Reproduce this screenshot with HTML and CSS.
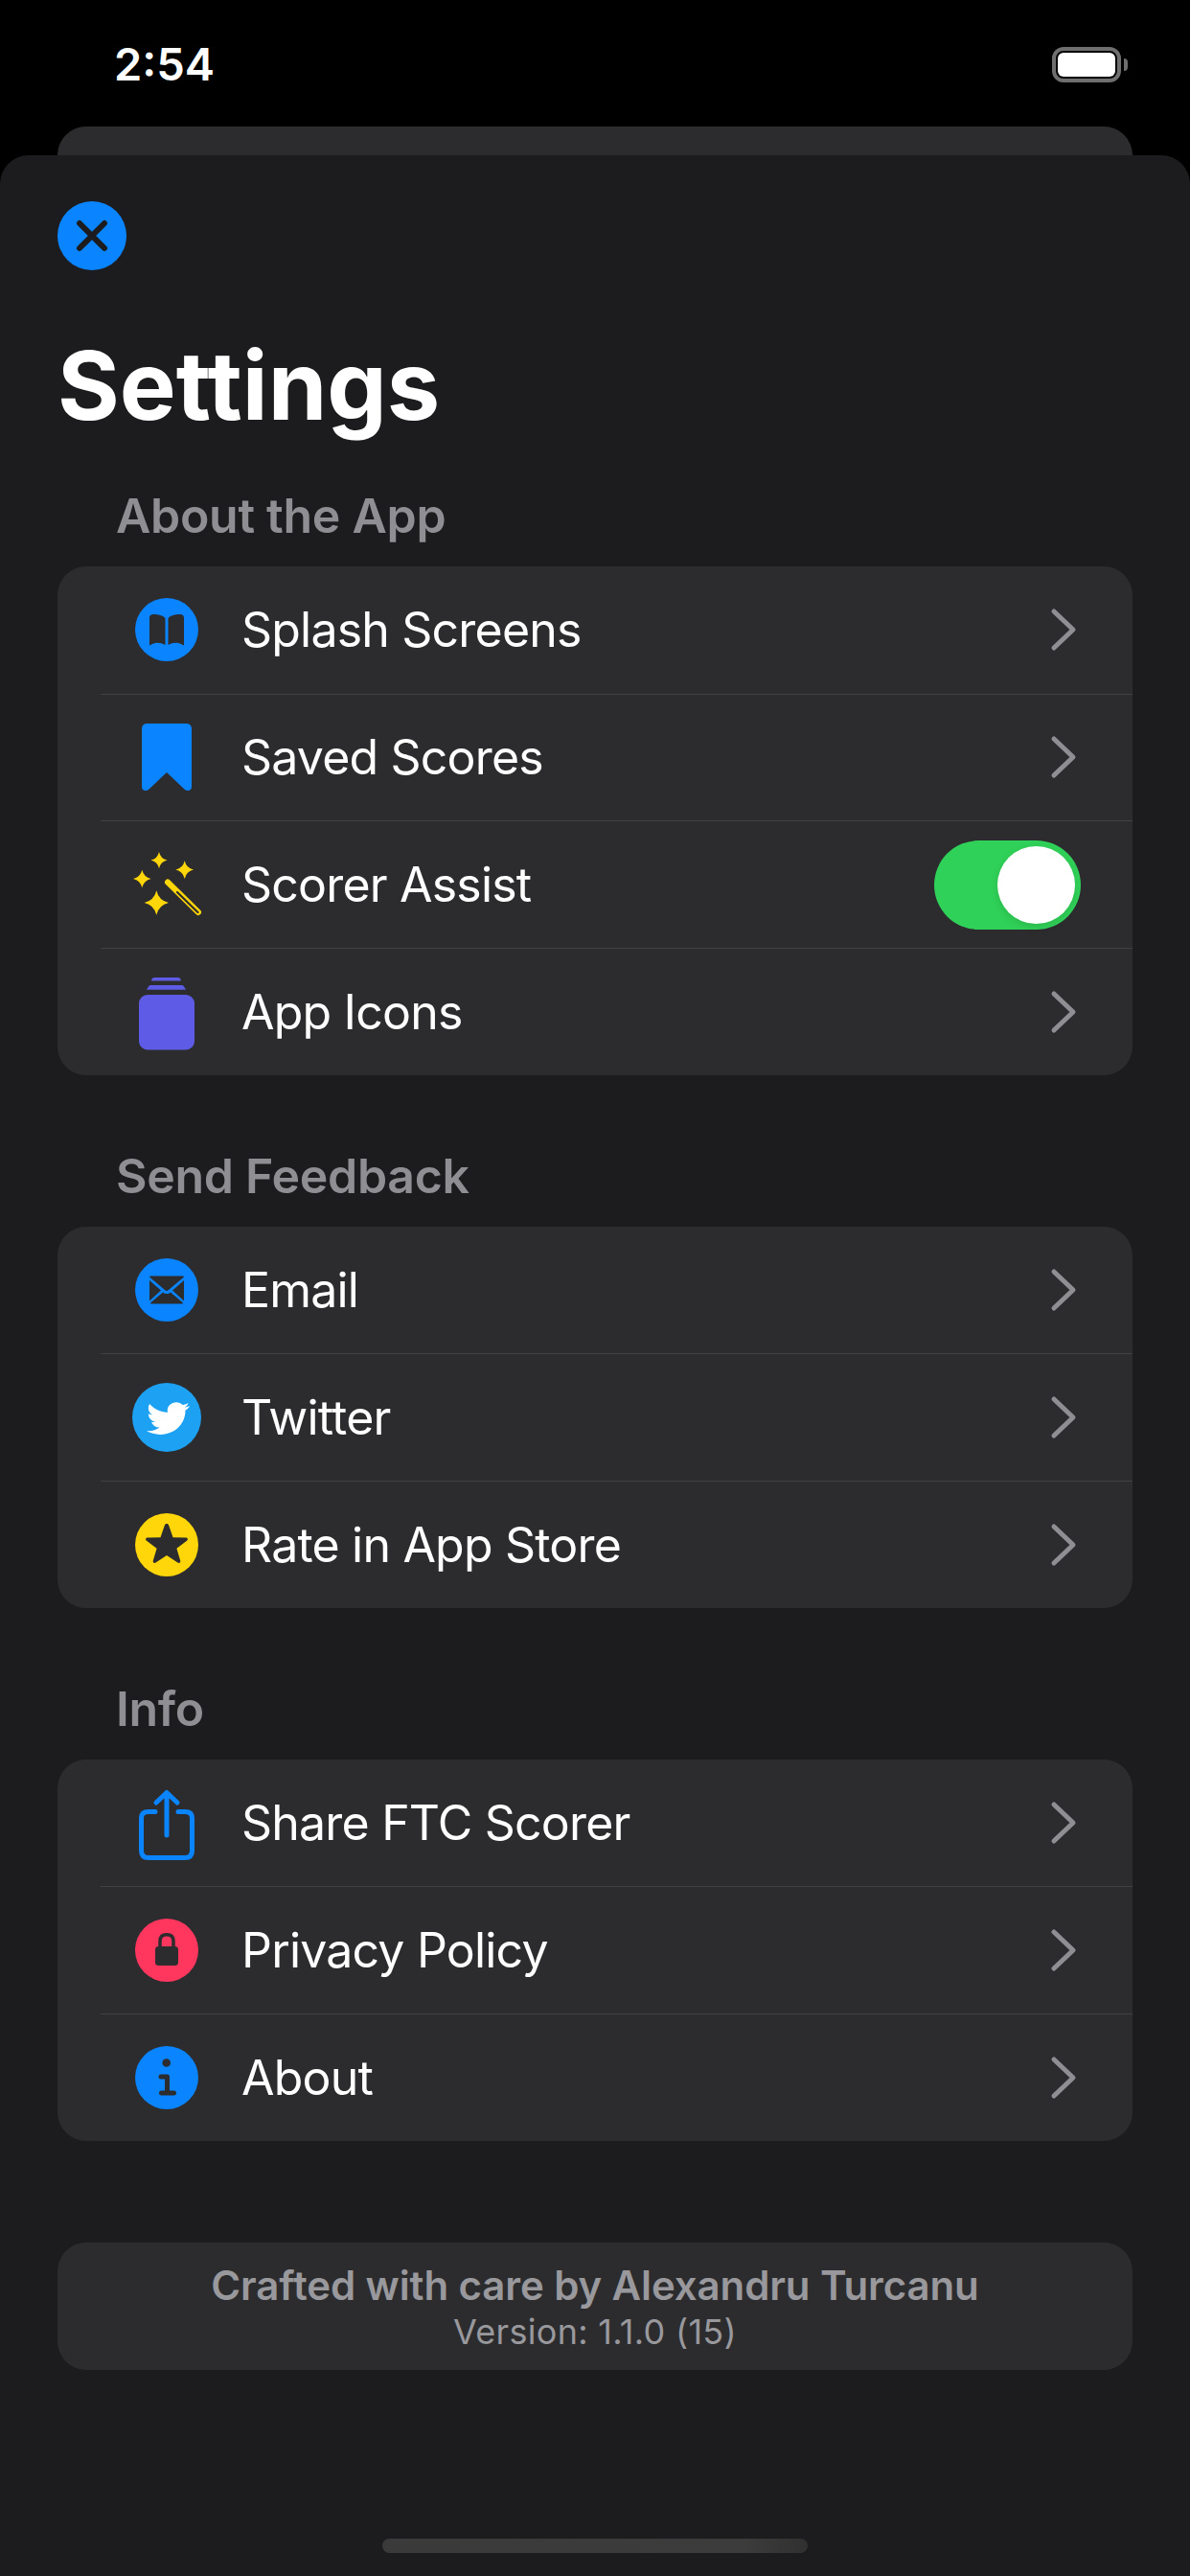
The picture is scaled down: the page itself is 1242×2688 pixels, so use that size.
FILE: index.html
```html
<!DOCTYPE html>
<html lang="en">
<head>
    <meta charset="UTF-8">
    <title>Settings</title>
    <link rel="stylesheet" href="styles.css">
</head>
<body>
<div class="status-bar">
    <span class="status-time">2:54</span>
    <div class="battery"><div class="battery-fill"></div></div>
</div>

<!-- the screen underneath the sheet -->
<div class="back-card"></div>

<div class="sheet">
    <button class="close-btn">
        <svg viewBox="0 0 72 72" width="72" height="72"><circle cx="36" cy="36" r="36" fill="#0a84ff"/><path d="M23 23L49 49M49 23L23 49" stroke="#1c1c1e" stroke-width="6" stroke-linecap="round"/></svg>
    </button>
    <h1 class="title">Settings</h1>

    <h2 class="section-title section-about">About the App</h2>
    <div class="card">
        <div class="row">
            <div class="row-icon">
                <svg viewBox="0 0 72 72" width="72" height="72"><circle cx="36" cy="36" r="33" fill="#0a84ff"/><path d="M18 24C18 21 19.500 20 23 20C27.500 20 31.500 21 34.500 24V52C31 50 27 49.500 24 50C21.500 50.300 20 51.500 18.500 52.500L18 52Z M54 24C54 21 52.500 20 49 20C44.500 20 40.500 21 37.500 24V52C41 50 45 49.500 48 50C50.500 50.300 52 51.500 53.500 52.500L54 52Z" fill="#2c2c2e"/></svg>
            </div>
            <span class="row-label">Splash Screens</span>
            <svg class="chevron" viewBox="0 0 30 46" width="30" height="46"><path d="M5 4L25 23L5 42" fill="none" stroke="#8e8e93" stroke-width="5" stroke-linecap="round" stroke-linejoin="round"/></svg>
        </div>
        <div class="row">
            <div class="row-icon">
                <svg viewBox="0 0 72 72" width="72" height="72"><path d="M16 1H56C60 1 62 3 62 7V67C62 71 58 72 55 70L36 52L17 70C14 72 10 71 10 67V7C10 3 12 1 16 1Z" fill="#0a84ff"/></svg>
            </div>
            <span class="row-label">Saved Scores</span>
            <svg class="chevron" viewBox="0 0 30 46" width="30" height="46"><path d="M5 4L25 23L5 42" fill="none" stroke="#8e8e93" stroke-width="5" stroke-linecap="round" stroke-linejoin="round"/></svg>
        </div>
        <div class="row">
            <div class="row-icon">
                <svg viewBox="0 0 72 72" width="72" height="72" fill="#ffd60a">
                    <path d="M28 2Q29.600 9 36.500 10.600Q29.600 12.200 28 19.200Q26.400 12.200 19.500 10.600Q26.400 9 28 2Z"/>
                    <path d="M54.700 11.300Q56.500 18.800 64 20.600Q56.500 22.400 54.700 29.900Q52.900 22.400 45.400 20.600Q52.900 18.800 54.700 11.300Z"/>
                    <path d="M10.300 20.700Q12.100 28.200 19.600 30Q12.100 31.800 10.300 39.300Q8.500 31.800 1 30Q8.500 28.200 10.300 20.700Z"/>
                    <path d="M25.300 42.300Q27.700 52.600 38 55Q27.700 57.400 25.300 67.700Q22.900 57.400 12.600 55Q22.900 52.600 25.300 42.300Z"/>
                    <path d="M37 33.500L69 65" fill="none" stroke="#ffd60a" stroke-width="6" stroke-linecap="round"/>
                    <path d="M47 44L68.500 65" fill="none" stroke="#2c2c2e" stroke-width="2.200" stroke-linecap="round"/>
                </svg>
            </div>
            <span class="row-label">Scorer Assist</span>
            <div class="toggle"><div class="toggle-knob"></div></div>
        </div>
        <div class="row">
            <div class="row-icon">
                <svg viewBox="0 0 72 72" width="72" height="72" fill="#5e5ce6"><path d="M20 3C20.500 1 21.500 0 23.500 0H47.500C49.500 0 50.500 1 51 3.500H20Z"/><path d="M15 12.700L17 9.500C17.800 8.300 18.800 8 20 8H51C52.200 8 53.200 8.300 54 9.500L56 12.700Z"/><rect x="7" y="18" width="58" height="57.500" rx="9"/></svg>
            </div>
            <span class="row-label">App Icons</span>
            <svg class="chevron" viewBox="0 0 30 46" width="30" height="46"><path d="M5 4L25 23L5 42" fill="none" stroke="#8e8e93" stroke-width="5" stroke-linecap="round" stroke-linejoin="round"/></svg>
        </div>
    </div>

    <h2 class="section-title">Send Feedback</h2>
    <div class="card">
        <div class="row">
            <div class="row-icon">
                <svg viewBox="0 0 72 72" width="72" height="72"><circle cx="36" cy="36" r="33" fill="#0a84ff"/><path d="M20 21.500H52C53.500 21.500 54 22 54 22.500L38 36C36.500 37.300 35.500 37.300 34 36L18 22.500C18 22 18.500 21.500 20 21.500Z M18 26L30 36.500L18 47.500Z M54 26L42 36.500L54 47.500Z M19 49.500L32 38.500C34.500 40.500 37.500 40.500 40 38.500L53 49.500C53 50 52.500 50.500 52 50.500H20C19.500 50.500 19 50 19 49.500Z" fill="#2c2c2e"/></svg>
            </div>
            <span class="row-label">Email</span>
            <svg class="chevron" viewBox="0 0 30 46" width="30" height="46"><path d="M5 4L25 23L5 42" fill="none" stroke="#8e8e93" stroke-width="5" stroke-linecap="round" stroke-linejoin="round"/></svg>
        </div>
        <div class="row">
            <div class="row-icon">
                <svg viewBox="0 0 72 72" width="72" height="72"><circle cx="36" cy="36" r="36" fill="#1da1f2"/><g transform="translate(15 16.500) scale(1.875 1.720)"><path d="M23.953 4.570a10 10 0 01-2.825.775 4.958 4.958 0 002.163-2.723c-.951.555-2.005.959-3.127 1.184a4.920 4.920 0 00-8.384 4.482C7.690 8.095 4.067 6.130 1.640 3.162a4.822 4.822 0 00-.666 2.475c0 1.710.870 3.213 2.188 4.096a4.904 4.904 0 01-2.228-.616v.060a4.923 4.923 0 003.946 4.827 4.996 4.996 0 01-2.212.085 4.936 4.936 0 004.604 3.417 9.867 9.867 0 01-6.102 2.105c-.390 0-.779-.023-1.170-.067a13.995 13.995 0 007.557 2.209c9.053 0 13.998-7.496 13.998-13.985 0-.210 0-.420-.015-.630A9.935 9.935 0 0024 4.590z" fill="#fff"/></g></svg>
            </div>
            <span class="row-label">Twitter</span>
            <svg class="chevron" viewBox="0 0 30 46" width="30" height="46"><path d="M5 4L25 23L5 42" fill="none" stroke="#8e8e93" stroke-width="5" stroke-linecap="round" stroke-linejoin="round"/></svg>
        </div>
        <div class="row">
            <div class="row-icon">
                <svg viewBox="0 0 72 72" width="72" height="72"><circle cx="36" cy="36" r="33" fill="#ffd60a"/><path d="M36 14C37 14 37.800 14.500 38.200 15.800L42.500 28.300L55.800 28.600C58 28.700 58.600 30.500 57 31.800L46.400 39.800L50.200 52.500C50.800 54.500 49 55.700 47.400 54.600L36 47L24.600 54.600C23 55.700 21.200 54.500 21.800 52.500L25.600 39.800L15 31.800C13.400 30.500 14 28.700 16.200 28.600L29.500 28.300L33.800 15.800C34.200 14.500 35 14 36 14Z" fill="#2c2c2e"/></svg>
            </div>
            <span class="row-label">Rate in App Store</span>
            <svg class="chevron" viewBox="0 0 30 46" width="30" height="46"><path d="M5 4L25 23L5 42" fill="none" stroke="#8e8e93" stroke-width="5" stroke-linecap="round" stroke-linejoin="round"/></svg>
        </div>
    </div>

    <h2 class="section-title">Info</h2>
    <div class="card">
        <div class="row">
            <div class="row-icon">
                <svg viewBox="0 0 72 72" width="72" height="72" fill="none" stroke="#0a84ff" stroke-width="5" stroke-linecap="round" stroke-linejoin="round"><path d="M24 24.500H17C12 24.500 9.500 27 9.500 31V65C9.500 70 12 72.500 17 72.500H55C60 72.500 62.500 70 62.500 65V31C62.500 27 60 24.500 55 24.500H48"/><path d="M36 49V4.500M25 15L36 4.500L47 15"/></svg>
            </div>
            <span class="row-label">Share FTC Scorer</span>
            <svg class="chevron" viewBox="0 0 30 46" width="30" height="46"><path d="M5 4L25 23L5 42" fill="none" stroke="#8e8e93" stroke-width="5" stroke-linecap="round" stroke-linejoin="round"/></svg>
        </div>
        <div class="row">
            <div class="row-icon">
                <svg viewBox="0 0 72 72" width="72" height="72"><circle cx="36" cy="36" r="33" fill="#ff375f"/><path d="M29 33V26.500C29 22 31.500 19.800 36 19.800C40.500 19.800 43 22 43 26.500V33" fill="none" stroke="#2c2c2e" stroke-width="3.500"/><rect x="24" y="32" width="24" height="20" rx="3.500" fill="#2c2c2e"/></svg>
            </div>
            <span class="row-label">Privacy Policy</span>
            <svg class="chevron" viewBox="0 0 30 46" width="30" height="46"><path d="M5 4L25 23L5 42" fill="none" stroke="#8e8e93" stroke-width="5" stroke-linecap="round" stroke-linejoin="round"/></svg>
        </div>
        <div class="row">
            <div class="row-icon">
                <svg viewBox="0 0 72 72" width="72" height="72"><circle cx="36" cy="36" r="33" fill="#0a84ff"/><circle cx="35.700" cy="20.500" r="4.300" fill="#2c2c2e"/><path d="M30 35H36.500V52M30.500 52H43.500" fill="none" stroke="#2c2c2e" stroke-width="5" stroke-linecap="round" stroke-linejoin="round"/></svg>
            </div>
            <span class="row-label">About</span>
            <svg class="chevron" viewBox="0 0 30 46" width="30" height="46"><path d="M5 4L25 23L5 42" fill="none" stroke="#8e8e93" stroke-width="5" stroke-linecap="round" stroke-linejoin="round"/></svg>
        </div>
    </div>

    <div class="credits">
        <div class="credits-name">Crafted with care by Alexandru Turcanu</div>
        <div class="credits-version">Version: 1.1.0 (15)</div>
    </div>

    <div class="home-bar"></div>
</div>
</body>
</html>
```

FILE: styles.css
```css
* {
    box-sizing: border-box;
}

body {
    margin: 0;
    width: 1242px;
    height: 2688px;
    overflow: hidden;
    position: relative;
    background: #000;
    font-family: Inter, "Liberation Sans", sans-serif;
    color: #fff;
}

.status-bar {
    height: 132px;
    padding: 39px 72px 0 119px;
    display: flex;
    justify-content: space-between;
    align-items: flex-start;
}

.status-time {
    font-size: 47px;
    font-weight: 600;
    line-height: 56px;
}

.battery {
    width: 72px;
    height: 37px;
    margin-top: 10px;
    padding: 2px;
    border: 4px solid #6f6f6f;
    border-radius: 12px;
    position: relative;
}

.battery::after {
    content: "";
    position: absolute;
    right: -11px;
    top: 8px;
    width: 4px;
    height: 13px;
    background: #6f6f6f;
    border-radius: 0 7px 7px 0;
}

.battery-fill {
    height: 100%;
    background: #fff;
    border-radius: 6px;
}

.back-card {
    height: 60px;
    margin: 0 60px;
    background: #2c2c2e;
    border-radius: 30px 30px 0 0;
}

.sheet {
    position: absolute;
    top: 162px;
    left: 0;
    right: 0;
    bottom: 0;
    padding: 48px 60px 0;
    background: #1c1c1e;
    border-radius: 30px 30px 0 0;
}

.close-btn {
    display: block;
    width: 72px;
    height: 72px;
    padding: 0;
    border: none;
    background: none;
}

.close-btn svg,
.row-icon svg,
.chevron {
    display: block;
}

.row-icon svg {
    overflow: visible;
}

.title {
    margin: 60px 0 0 0;
    font-size: 99px;
    font-weight: 700;
    line-height: 120px;
}

.section-title {
    margin: 72px 0 0 61px;
    height: 66px;
    font-size: 50px;
    font-weight: 600;
    line-height: 66px;
    letter-spacing: -0.3px;
    color: #8e8e93;
}

.section-about {
    margin-top: 43px;
}

.card {
    margin-top: 20px;
    background: #2c2c2e;
    border-radius: 30px;
}

.row {
    height: 132.67px;
    margin-left: 45px;
    display: flex;
    align-items: center;
}

.row + .row {
    border-top: 1px solid #414143;
}

.row-icon {
    width: 72px;
    height: 72px;
    margin: 0 42px 0 33px;
    flex: none;
}

.row-label {
    flex: 1;
    font-size: 50px;
    font-weight: 400;
    letter-spacing: -0.8px;
}

.chevron {
    margin-right: 57px;
    flex: none;
}

.toggle {
    width: 153px;
    height: 93px;
    margin-right: 54px;
    padding: 6px;
    display: flex;
    justify-content: flex-end;
    background: #30d158;
    border-radius: 47px;
}

.toggle-knob {
    width: 81px;
    height: 81px;
    background: #fff;
    border-radius: 50%;
    box-shadow: 0 3px 8px rgba(0, 0, 0, 0.12);
}

.credits {
    height: 133px;
    margin-top: 106px;
    padding-top: 21px;
    text-align: center;
    background: #2c2c2e;
    border-radius: 30px;
}

.credits-name {
    font-size: 42px;
    font-weight: 600;
    line-height: 48px;
    letter-spacing: -0.1px;
    color: #98989d;
}

.credits-version {
    margin-top: 2px;
    font-size: 36px;
    line-height: 44px;
    letter-spacing: 0.3px;
    color: #98989d;
}

.home-bar {
    position: absolute;
    left: 399px;
    bottom: 24px;
    width: 444px;
    height: 15px;
    background: linear-gradient(90deg, #3a3a3b, #3c3c3c 85%, #303031);
    border-radius: 8px;
}
```
